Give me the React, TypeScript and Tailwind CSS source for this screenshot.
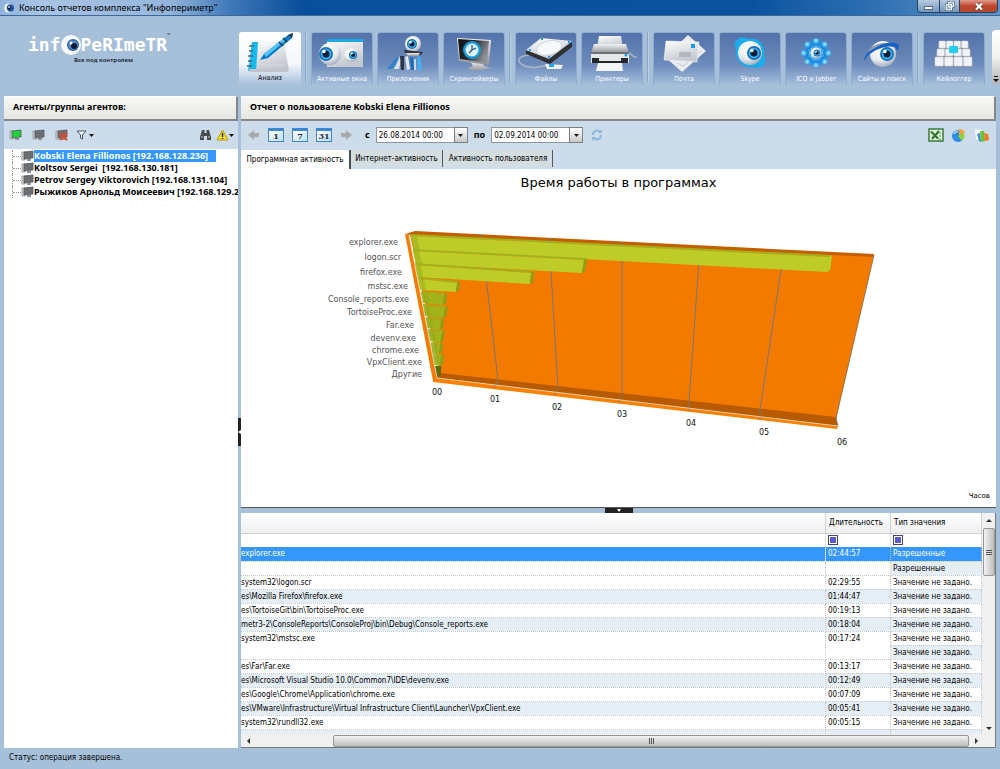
import React from "react";

const uiFont = "font-['DejaVu_Sans_Condensed','DejaVu_Sans',sans-serif]";
const boldFont = "text-[9px] font-bold font-['Noto_Sans',sans-serif]";

function Eye({ x, y, r, iris = r * 0.5, dx = 0 }: { x: number; y: number; r: number; iris?: number; dx?: number }) {
  return (
    <g>
      <circle cx={x} cy={y} r={r} fill="url(#ball)" />
      <circle cx={x + dx} cy={y} r={iris} fill="#1d6fb5" />
      <circle cx={x + dx} cy={y} r={iris * 0.75} fill="#35b4ee" />
      <circle cx={x + dx} cy={y} r={iris * 0.5} fill="#0b1d38" />
      <circle cx={x + dx - iris * 0.3} cy={y - iris * 0.35} r={iris * 0.25} fill="#fff" />
    </g>
  );
}

function SharedDefs() {
  return (
    <svg className="absolute w-0 h-0" aria-hidden="true">
      <defs>
        <radialGradient id="ball" cx="0.4" cy="0.3" r="0.75">
          <stop offset="0" stopColor="#fff" />
          <stop offset="0.6" stopColor="#e8ebef" />
          <stop offset="1" stopColor="#9aa6b8" />
        </radialGradient>
        <linearGradient id="paper" x1="0" y1="0" x2="0.4" y2="1">
          <stop offset="0" stopColor="#fff" />
          <stop offset="1" stopColor="#c3c8cf" />
        </linearGradient>
        <linearGradient id="metal" x1="0" y1="0" x2="0" y2="1">
          <stop offset="0" stopColor="#f5f5f6" />
          <stop offset="1" stopColor="#8e9197" />
        </linearGradient>
        <linearGradient id="screen" x1="0" y1="0" x2="1" y2="0.4">
          <stop offset="0" stopColor="#111" />
          <stop offset="0.5" stopColor="#26272a" />
          <stop offset="1" stopColor="#8d9097" />
        </linearGradient>
        <radialGradient id="petal" cx="0.5" cy="0.3" r="0.7">
          <stop offset="0" stopColor="#b5eeff" />
          <stop offset="0.5" stopColor="#35aaf0" />
          <stop offset="1" stopColor="#0f66c8" />
        </radialGradient>
      </defs>
    </svg>
  );
}

const icons: Record<string, React.ReactNode> = {
  analysis: (
    <g>
      <path d="M14 10 H45 L50 39 H10 Z" fill="url(#paper)" />
      <path d="M13 10 H19 L17 39 H9 Z" fill="#16b9ee" />
      <path d="M10 37 H49 V40 H10 Z" fill="#bfc4ca" />
      <path d="M22 21 H45 M21 27 H46 M20 33 H47" stroke="#d4d8de" />
      <path d="M10 14 H15 M10 19 H14 M9 24 H14 M9 29 H13 M8 34 H13" stroke="#5a626c" strokeWidth="1.5" />
      <path d="M21 28 L25 22 L49 3 L54 1 L53 6 L29 26 Z" fill="#0c78c8" />
      <path d="M25 22 L45 6 L47 8 L27 25 Z" fill="#54c4f8" />
      <path d="M40 10 L44 14 M44 6 L48 10" stroke="#26303c" strokeWidth="1.5" />
      <path d="M49 3 L54 1 L53 6 Z" fill="#2c3846" />
    </g>
  ),
  windows: (
    <g>
      <rect x="16" y="6" width="36" height="28" fill="url(#paper)" />
      <rect x="16" y="6" width="36" height="3" fill="#18a9e8" />
      <Eye x={19} y={21} r={11} iris={7} dx={-4} />
      <Eye x={40} y={22} r={7} iris={4} dx={2} />
    </g>
  ),
  apps: (
    <g>
      <Eye x={36} y={11} r={8} iris={5} dx={-1} />
      <path d="M27 17 L46 19 L44 22 L28 20 Z" fill="#30343a" />
      <path d="M29 20 H43 L41 23 H31 Z" fill="url(#metal)" />
      <path d="M10 36 L20 24 L23 26 L15 36 Z" fill="#2f83cc" />
      <path d="M17 36 L23 23 L25 24 L22 36 Z" fill="#dbe2ea" />
      <path d="M23 23 H27 V37 H24 Z" fill="#2b3543" />
      <path d="M28 24 L31 23 L33 36 L30 37 Z" fill="#e4e8ee" />
      <path d="M33 25 L36 24 L37 37 H34 Z" fill="#176db9" />
      <path d="M37 26 H39 V37 H37 Z" fill="#cdd5df" />
      <path d="M40 24 L43 23 L45 37 H41 Z" fill="#42b3ee" />
    </g>
  ),
  screensaver: (
    <g>
      <path d="M27 28 H39 L41 33 L48 35 L34 38 L24 36 L30 33 Z" fill="url(#metal)" />
      <path d="M14 5 L48 7 L46 32 L16 28 Z" fill="url(#metal)" />
      <path d="M15 6 L46 8 L44 30 L17 26 Z" fill="url(#screen)" />
      <circle cx="29" cy="17" r="9" fill="#159bd8" />
      <circle cx="29" cy="17" r="6.5" fill="#dff4fd" />
      <path d="M29 12 V17 L33 15 M29 17 L26 20" stroke="#1c4f80" fill="none" strokeWidth="1.2" />
    </g>
  ),
  files: (
    <g>
      <path d="M15 22 C2 23 0 29 10 33 C17 36 24 34 33 32" stroke="#aeb6c1" strokeWidth="1.5" fill="none" />
      <path d="M11 17 L34 25 L57 9 V14 L35 31 L11 21 Z" fill="#2e3033" />
      <path d="M11 17 L26 5 L57 8 L34 26 Z" fill="url(#paper)" />
      <ellipse cx="34" cy="15" rx="13" ry="7" transform="rotate(-14 34 15)" fill="#f7f8f9" stroke="#cbd0d6" strokeWidth="0.8" />
      <path d="M26 6 l2 0 M53 9 l2 0 M14 17 l2 0 M33 24 l2 0" stroke="#18a0e4" strokeWidth="2" />
      <path d="M30 31 L48 32 L46 36 L32 36 Z" fill="#edf0f4" />
      <path d="M34 31 H39 V34 H34 Z" fill="#22a8e6" />
    </g>
  ),
  printers: (
    <g>
      <path d="M18 3 H40 L42 15 H16 Z" fill="url(#paper)" />
      <path d="M45 20 C51 17 50 26 56 24" stroke="#aeb6c1" strokeWidth="1.5" fill="none" />
      <path d="M13 11 H45 L48 20 H10 Z" fill="url(#metal)" />
      <path d="M10 20 H48 V30 H10 Z" fill="#e6e7e9" />
      <path d="M10 19 H48 V21 H10 Z" fill="#6c7078" />
      <path d="M11 25 H18 V30 H11 Z M40 25 H47 V30 H40 Z M18 28 H40 V31 H18 Z" fill="#24272c" />
      <circle cx="45" cy="22" r="1.5" fill="#139ce4" />
      <path d="M17 30 H41 L42 38 H15 Z" fill="#f3f4f6" />
    </g>
  ),
  mail: (
    <g>
      <path d="M35 2 L53 18 L29 39 L12 24 Z" fill="#e9ebee" />
      <path d="M24 30 L30 33 L48 18" stroke="#c2c6cc" fill="none" />
      <path d="M13 8 L46 9 L44 29 L11 27 Z" fill="url(#paper)" stroke="#fff" strokeWidth="0.5" />
      <path d="M38 11 H42 V15 H38 Z" fill="#149ce6" />
      <path d="M26 19 H38 V24 H26 Z" fill="#b3b8bf" />
    </g>
  ),
  skype: (
    <g>
      <path d="M17 16 C12 6 24 2 29 6 C39 3 47 12 45 22 C50 32 40 37 34 34 C24 36 15 27 17 16 Z" fill="#1bacec" />
      <Eye x={31} y={20} r={12} iris={7} dx={4} />
    </g>
  ),
  icq: (
    <g>
      {[0, 45, 90, 135, 180, 225, 270, 315].map((a) => (
        <g key={a} transform={`rotate(${a} 31 20)`}>
          <path d="M31 20 L27 11 C25 4 37 4 35 11 Z" fill="url(#petal)" />
          <circle cx="31" cy="9" r="3.8" fill="url(#petal)" />
        </g>
      ))}
      <Eye x={31} y={20} r={5.5} iris={3.5} dx={1} />
    </g>
  ),
  sites: (
    <g>
      <Eye x={32} y={21} r={13} iris={7} dx={4} />
      <path d="M18 18 C25 10 37 9 44 14" stroke="#8e98a8" strokeWidth="2" fill="none" />
      <path d="M13 28 C12 16 44 3 48 13 C48 16 47 17 46 18 C47 9 20 14 13 28 Z" fill="#1763c4" />
    </g>
  ),
  keylogger: (
    <g>
      <path d="M16 8 H45 L50 34 H11 Z" fill="#8b93a1" />
      {[0, 1, 2, 3].map((c) => (
        <g key={c} fill="#f1f2f5" stroke="#cfd3da" strokeWidth="0.5">
          <rect x={16 + c * 7.5} y="8" width="6.5" height="7" rx="1" />
          <rect x={14 + c * 8.5} y="16" width="7.5" height="7" rx="1" />
          <rect x={12 + c * 9.5} y="24" width="8.5" height="9" rx="1" />
        </g>
      ))}
      <rect x="26" y="13" width="9" height="7" rx="1" fill="#25cdf0" />
    </g>
  ),
};

const modules = [
  { id: "analysis", label: "Анализ", sepAfter: true },
  { id: "windows", label: "Активные окна" },
  { id: "apps", label: "Приложения" },
  { id: "screensaver", label: "Скринсейверы", sepAfter: true },
  { id: "files", label: "Файлы" },
  { id: "printers", label: "Принтеры", sepAfter: true },
  { id: "mail", label: "Почта" },
  { id: "skype", label: "Skype" },
  { id: "icq", label: "ICQ и Jabber" },
  { id: "sites", label: "Сайты и поиск", sepAfter: true },
  { id: "keylogger", label: "Кейлоггер" },
];

const agents = [
  "Kobski Elena Fillionos [192.168.128.236]",
  "Koltsov Sergei  [192.168.130.181]",
  "Petrov Sergey Viktorovich [192.168.131.104]",
  "Рыжиков Арнольд Моисеевич [192.168.129.2",
];

const bars = [
  { name: "explorer.exe", lx: 398, ly: 245, pts: [411, 236, 829, 257, 827, 272, 414, 250] },
  { name: "logon.scr", lx: 401, ly: 260, pts: [413, 251, 584, 260, 582, 273, 416, 264] },
  { name: "firefox.exe", lx: 402, ly: 275, pts: [415, 265, 531, 273, 530, 284, 417, 277] },
  { name: "mstsc.exe", lx: 408, ly: 289, pts: [418, 279, 457, 283, 456, 292, 420, 290] },
  { name: "Console_reports.exe", lx: 409, ly: 302, pts: [421, 293, 444, 295, 443, 305, 423, 303] },
  { name: "TortoiseProc.exe", lx: 412, ly: 315, pts: [423, 306, 445, 308, 443, 318, 425, 316] },
  { name: "Far.exe", lx: 414, ly: 328, pts: [426, 319, 441, 320, 440, 330, 427, 328] },
  { name: "devenv.exe", lx: 416, ly: 341, pts: [428, 331, 442, 332, 440, 343, 430, 341] },
  { name: "chrome.exe", lx: 419, ly: 353, pts: [431, 344, 440, 345, 439, 354, 432, 353] },
  { name: "VpxClient.exe", lx: 422, ly: 365, pts: [432, 355, 441, 356, 440, 366, 434, 365] },
];

const gridLines = [
  [481, 234, 498, 380, 494, 388],
  [549, 238, 558, 388, 555, 395],
  [622, 242, 622, 394, 619, 403],
  [700, 246, 689, 402, 688, 411],
  [784, 250, 760, 410, 760, 419],
];

const ticks = [
  ["00", 437, 395],
  ["01", 495, 402],
  ["02", 557, 410],
  ["03", 622, 417],
  ["04", 691, 426],
  ["05", 764, 435],
  ["06", 842, 445],
] as const;

const rows = [
  { path: "explorer.exe", time: "02:44:57", type: "Разрешенные", kind: "selected" },
  { path: "", time: "", type: "Разрешенные", kind: "half" },
  { path: "system32\\logon.scr", time: "02:29:55", type: "Значение не задано.", kind: "plain" },
  { path: "es\\Mozilla Firefox\\firefox.exe", time: "01:44:47", type: "Значение не задано.", kind: "alt" },
  { path: "es\\TortoiseGit\\bin\\TortoiseProc.exe", time: "00:19:13", type: "Значение не задано.", kind: "plain" },
  { path: "metr3-2\\ConsoleReports\\ConsoleProj\\bin\\Debug\\Console_reports.exe", time: "00:18:04", type: "Значение не задано.", kind: "alt" },
  { path: "system32\\mstsc.exe", time: "00:17:24", type: "Значение не задано.", kind: "tall" },
  { path: "", time: "", type: "Значение не задано.", kind: "half" },
  { path: "es\\Far\\Far.exe", time: "00:13:17", type: "Значение не задано.", kind: "plain" },
  { path: "es\\Microsoft Visual Studio 10.0\\Common7\\IDE\\devenv.exe", time: "00:12:49", type: "Значение не задано.", kind: "alt" },
  { path: "es\\Google\\Chrome\\Application\\chrome.exe", time: "00:07:09", type: "Значение не задано.", kind: "plain" },
  { path: "es\\VMware\\Infrastructure\\Virtual Infrastructure Client\\Launcher\\VpxClient.exe", time: "00:05:41", type: "Значение не задано.", kind: "alt" },
  { path: "system32\\rundll32.exe", time: "00:05:15", type: "Значение не задано.", kind: "plain" },
  { path: "", time: "", type: "", kind: "alt" },
];

function TitleBar() {
  return (
    <header className="flex h-4 shrink-0 items-center bg-[linear-gradient(to_right,#8fb2dc,#a9c4e4_4%,#94b5db_17%,#3f78b8_23%,#0a4f9b_30%,#0a529f_75%,#2a6cb0_86%,#5d93c9)] border-b border-[#3c6796] pl-1">
      <svg className="w-[11px] h-3 mr-1" viewBox="0 0 12 12">
        <circle cx="5" cy="6" r="5" fill="#f2f6fa" />
        <circle cx="7" cy="6" r="4" fill="#2757a5" />
        <circle cx="6" cy="6" r="2" fill="#0d1b33" />
        <circle cx="5.5" cy="5" r="1" fill="#fff" />
      </svg>
      <h1 className="text-[9px] text-black font-['Noto_Sans',sans-serif]">Консоль отчетов комплекса "Инфопериметр"</h1>
      <div className="ml-auto mr-0.5 flex self-start h-[13px] rounded-b border border-t-0 border-[#27415f] overflow-hidden">
        <button aria-label="Свернуть" className="w-[22px] bg-linear-to-b from-[#b6cbe2] to-[#7596ba] border-r border-[#27415f] flex items-center justify-center">
          <svg width="11" height="10" viewBox="0 0 11 10"><path d="M1.5 5.5 h8 v3 h-8 z" fill="#fff" stroke="#3c4d63" strokeWidth="0.8" /></svg>
        </button>
        <button aria-label="Восстановить" className="w-5 bg-linear-to-b from-[#b6cbe2] to-[#7596ba] border-r border-[#27415f] flex items-center justify-center">
          <svg width="10" height="10" viewBox="0 0 10 10"><path d="M3.5 1 h5 v5 h-5 z M1 3.5 h5.5 v5.5 h-5.5 z" fill="#8fabca" stroke="#3c4d63" strokeWidth="2" /><path d="M3.5 1 h5 v5 h-5 z M1 3.5 h5.5 v5.5 h-5.5 z" fill="#8fabca" stroke="#fff" /></svg>
        </button>
        <button aria-label="Закрыть" className="w-[37px] bg-linear-to-b from-[#dc9a8c] via-[#c0432b] via-50% to-[#b34a31] flex items-center justify-center">
          <svg width="10" height="9" viewBox="0 0 10 9"><path d="M2 1.5 L8 7.5 M8 1.5 L2 7.5" stroke="#6b3a3a" strokeWidth="3.5" /><path d="M2 1.5 L8 7.5 M8 1.5 L2 7.5" stroke="#fff" strokeWidth="2.2" /></svg>
        </button>
      </div>
    </header>
  );
}

function Logo() {
  return (
    <div className="w-[235px] shrink-0 pl-7 pt-[17px]">
      <div className="flex items-center h-6 text-white text-[18px] leading-none font-bold font-['DejaVu_Sans_Mono',monospace]">
        <span>inf</span>
        <svg className="w-5 h-5" viewBox="0 0 20 20">
          <circle cx="10" cy="10" r="10" fill="#f6f8fa" />
          <circle cx="12" cy="10" r="6" fill="#3565ad" />
          <circle cx="12" cy="10" r="4.5" fill="#5b8dcc" />
          <circle cx="13" cy="11" r="3" fill="#0c1a33" />
          <circle cx="10" cy="8" r="1.5" fill="#fff" />
        </svg>
        <span>PeRImeTR</span>
        <span className="self-start text-[5px] text-slate-700">™</span>
      </div>
      <p className="pl-[46px] text-[6px] leading-none font-bold text-[#26323f] font-['Noto_Sans',sans-serif]">Все под контролем</p>
    </div>
  );
}

function ModuleBar() {
  return (
    <nav className="flex h-[80px] shrink-0">
      <Logo />
      <div className="flex flex-1 min-w-0 gap-1 pt-4 pl-1">
        {modules.map((m, i) => (
          <React.Fragment key={m.id}>
            <button
              className={
                i === 0
                  ? "flex h-[53px] w-[62px] shrink-0 flex-col items-center rounded-t-[3px] bg-linear-to-b from-white via-[#f3f7fb] via-60% to-[#a7c0da] text-black"
                  : "flex h-[53px] w-[62px] shrink-0 flex-col items-center rounded-t-[3px] border-x border-t border-[#8fabd0] bg-linear-to-b from-[#5373aa] via-[#6c8abb] via-60% to-[#a5bfdb] text-white"
              }
            >
              <svg className="w-[62px] h-[41px] shrink-0" viewBox="0 0 62 41">{icons[m.id]}</svg>
              <span className="text-[7px] leading-[10px] whitespace-nowrap">{m.label}</span>
            </button>
            {m.sepAfter && <span className="w-0.5 h-[50px] shrink-0 border-l border-[#8ba5c2] bg-[#b9cfe4]" />}
          </React.Fragment>
        ))}
      </div>
      <button aria-label="Другие модули" className="flex w-2 mt-3.5 h-[54px] items-end justify-center rounded-l bg-linear-to-b from-white via-[#f1f1ef] to-[#b5b5b5] pb-0.5">
        <svg width="6" height="6" viewBox="0 0 6 6"><path d="M1 0 H5 V1 H1 Z M0 3 H6 L3 6 Z" fill="#111" /></svg>
      </button>
    </nav>
  );
}

function PcIcon({ color = "#6b6f74", off = false }: { color?: string; off?: boolean }) {
  return (
    <svg className="w-[13px] h-3 shrink-0" viewBox="0 0 13 12">
      <path d="M1 2 H4 V10 H1 Z" fill="#d5d7d9" stroke="#8c9094" strokeWidth="0.8" />
      <path d="M3 2 L12 1 V8 L3 9 Z" fill={color} stroke="#56595d" strokeWidth="0.8" />
      <path d="M6 9 H10 V11 H6 Z" fill="#8c9094" />
      {off && <path d="M5 4 L12 11 M12 4 L5 11" stroke="#e2492a" strokeWidth="2" />}
    </svg>
  );
}

const caret = <svg width="5" height="3" viewBox="0 0 5 3"><path d="M0 0 H5 L2.5 3 Z" fill="#111" /></svg>;

const panelHead = `h-[25px] shrink-0 border-t border-b-2 border-r-2 border-t-white border-r-[#85888a] border-b-[#85888a] bg-linear-to-b from-[#f7f7f5] to-[#e6e6e1] leading-[20px] text-black ${boldFont}`;

function AgentsPanel() {
  return (
    <aside className="flex w-[234px] shrink-0 flex-col bg-white">
      <h2 className={`${panelHead} pl-[9px]`}>Агенты/группы агентов:</h2>
      <div className="flex h-7 shrink-0 items-center bg-[#cddceb] pl-[5px] pr-1">
        <button aria-label="Включенные" className="mr-2.5"><PcIcon color="#1fd03c" /></button>
        <button aria-label="Выключенные" className="mr-2.5"><PcIcon /></button>
        <button aria-label="Удалить" className="mr-2"><PcIcon off /></button>
        <button aria-label="Фильтр" className="flex items-center gap-0.5">
          <svg width="11" height="10" viewBox="0 0 11 10"><path d="M1 1 H10 L6.5 5 V9 L4.5 8 V5 Z" fill="#eef3f8" stroke="#4d5660" /></svg>
          {caret}
        </button>
        <button aria-label="Поиск" className="ml-auto mr-1">
          <svg width="13" height="12" viewBox="0 0 13 12">
            <path d="M3 1 H5.5 V4 H7.5 V1 H10 L12 8 V11 H8 V7 H5 V11 H1 V8 Z" fill="#474b50" />
            <path d="M2 8 H4 M9 8 H11" stroke="#c6cbd0" />
          </svg>
        </button>
        <button aria-label="Предупреждения" className="flex items-center">
          <svg width="13" height="12" viewBox="0 0 13 12"><path d="M6.5 1 L12 11 H1 Z" fill="#fbe11d" stroke="#b99a10" strokeLinejoin="round" /><path d="M6.5 4 V8 M6.5 9 V10" stroke="#222" strokeWidth="1.4" /></svg>
          {caret}
        </button>
      </div>
      <ul className={`flex-1 overflow-hidden pt-px leading-[12px] text-black ${boldFont}`}>
        {agents.map((name, i) => (
          <li key={name} className="flex h-3 items-center whitespace-pre">
            <span className="ml-2 h-full border-l border-dotted border-[#999]" />
            <span className="w-2 shrink-0 border-t border-dotted border-[#999]" />
            <PcIcon />
            <button className={i === 0 ? "bg-[#3596fb] pr-2 text-left text-white" : "text-left"}>{name}</button>
          </li>
        ))}
      </ul>
    </aside>
  );
}

function CalendarButton({ days }: { days: string }) {
  return (
    <button className="h-3.5 w-4 border border-[#3f86d0] border-t-[3px] bg-linear-to-br from-white to-[#b9def5] text-center text-[8px] leading-[10px] font-bold text-[#1e2c44] font-['DejaVu_Serif',serif]">
      {days}
    </button>
  );
}

function Arrow({ flip = false }: { flip?: boolean }) {
  return (
    <button aria-label={flip ? "Вперёд" : "Назад"}>
      <svg className={flip ? "rotate-180" : ""} width="13" height="12" viewBox="0 0 13 12"><path d="M1 6 L7 1 V4 H12 V8 H7 V11 Z" fill="#a5a9ad" stroke="#bcc2c7" strokeWidth="0.5" /></svg>
    </button>
  );
}

function DateField({ id, label, value }: { id: string; label: string; value: string }) {
  return (
    <div className="flex items-center">
      <label htmlFor={id} className={`mr-1.5 ${boldFont}`}>{label}</label>
      <input id={id} defaultValue={value} className="h-4 w-[79px] border border-[#8f959b] bg-white px-0.5 text-[8px] text-black" />
      <button aria-label="Открыть календарь" className="-ml-px flex h-4 w-3.5 items-center justify-center border border-[#7b7f83] bg-linear-to-b from-white to-[#c9c9c9]">{caret}</button>
    </div>
  );
}

function ReportToolbar() {
  return (
    <div className="flex h-7 shrink-0 items-center gap-2 bg-[#cddceb] px-1.5">
      <Arrow />
      <div className="flex gap-2">
        <CalendarButton days="1" />
        <CalendarButton days="7" />
        <CalendarButton days="31" />
      </div>
      <Arrow flip />
      <div className="flex gap-1.5 ml-1">
        <DateField id="from" label="с" value="26.08.2014 00:00" />
        <DateField id="to" label="по" value="02.09.2014 00:00" />
      </div>
      <button aria-label="Обновить">
        <svg width="12" height="12" viewBox="0 0 12 12"><path d="M2 6 A4 4 0 0 1 9 3 M10 6 A4 4 0 0 1 3 9" fill="none" stroke="#8fb9dc" strokeWidth="2" /><path d="M7 4 H11 V0 Z M5 8 H1 V12 Z" fill="#8fb9dc" /></svg>
      </button>
      <div className="ml-auto flex items-center gap-[7px]">
        <button aria-label="Экспорт в Excel">
          <svg width="16" height="14" viewBox="0 0 16 14"><path d="M1 1 H15 V13 H1 Z" fill="#e5f0df" stroke="#3b7a3c" strokeWidth="1.5" /><path d="M3 3.5 L10 10.5 M11 3 L4 11" stroke="#2c7a31" strokeWidth="2.2" /><path d="M11 5 H13 M11 8 H13 M10 11 H13" stroke="#5c9c58" /></svg>
        </button>
        <button aria-label="Круговая диаграмма">
          <svg width="16" height="15" viewBox="0 0 16 15"><circle cx="7" cy="8" r="6" fill="#2f8de4" /><path d="M7 8 L12.5 5 A6 6 0 0 1 11 13 Z" fill="#8ed43b" /><path d="M8 7 V1 A6 6 0 0 1 14 5 Z" fill="#f8a437" /><path d="M3 6 A4 4 0 0 1 7 3.5" stroke="#a8dcfb" strokeWidth="1.5" fill="none" /></svg>
        </button>
        <button aria-label="Столбчатая диаграмма">
          <svg width="16" height="15" viewBox="0 0 16 15"><path d="M1 1 L8 2 L6 12 L2 11 Z" fill="#f7fafc" /><path d="M3 6 L6 5 L7 14 L5 13 Z" fill="#3a8de0" /><path d="M6 3 L10 3 L11 13 L7 14 Z" fill="#6cc12e" /><path d="M10 5 L14 6 L15 12 L11 13 Z" fill="#f07a22" /></svg>
        </button>
      </div>
    </div>
  );
}

function Tabs() {
  const tabs = ["Программная активность", "Интернет-активность", "Активность пользователя"];
  return (
    <div role="tablist" className="flex h-5 shrink-0 bg-[#cddceb] pt-px text-[8px] text-black">
      {tabs.map((t, i) => (
        <button
          key={t}
          role="tab"
          aria-selected={i === 0}
          className={i === 0 ? "w-[110px] whitespace-nowrap border-r-2 border-[#4b4f52] bg-white" : "mr-px h-[17px] w-[92px] whitespace-nowrap border-r border-[#55595c] bg-[#d4dddf] last:w-[109px]"}
        >
          {t}
        </button>
      ))}
    </div>
  );
}

function Chart() {
  return (
    <section className="flex flex-1 min-h-0 flex-col border-b border-[#55595c] bg-white">
      <h3 className="h-[26px] shrink-0 pt-1.5 text-center text-[13px] leading-[16px] text-black font-['DejaVu_Sans',sans-serif]">Время работы в программах</h3>
      <svg className="w-full flex-1 min-h-0" viewBox="242 195 753 290" fontFamily="DejaVu Sans, sans-serif" fontSize="8">
        {/* back wall, floor and side frame */}
        <polygon points="410,235 874,255 836,419 440,374" fill="#f37a00" />
        <polygon points="405,234 415,231 874,254 873,257 411,235" fill="#c45f00" />
        <polygon points="440,373 836,417 838,426 437,378" fill="#b85a00" />
        <polygon points="405,234 409,235 437,378 433,381" fill="#f37a00" />
        <polygon points="433,380 437,378 838,426 837,429 433,382" fill="#f98000" />
        <path d="M874 255 L836 418 L838 427" fill="none" stroke="#7d6a55" strokeWidth="0.8" />
        {gridLines.map(([a, b, c, d, e, f]) => (
          <path key={a} d={`M${a} ${b} L${c} ${d} L${e} ${f}`} fill="none" stroke="#7a7672" />
        ))}
        {bars.map(({ name, lx, ly, pts: [x1, y1, x2, y2, x3, y3, x4, y4] }, i) => (
          <g key={name}>
            <g opacity="0.93">
              <polygon points={`${x1},${y1} ${x1},${y1 - 2} ${x2 + 1},${y2 - 2} ${x2},${y2}`} fill="#9db321" />
              <polygon points={`${x1},${y1} ${x2},${y2} ${x3},${y3} ${x4},${y4}`} fill={i < 4 ? "#bbd32a" : "#9db91e"} />
              <polygon points={`${x2},${y2} ${x2 + 3},${y2 - 2} ${x3 + 3},${y3 - 2} ${x3},${y3}`} fill={i < 1 ? "#a9e02c" : "#7fa318"} />
              <polygon points={`${x1},${y1} ${x1 + 6},${y1} ${x4 + 6},${y4} ${x4},${y4}`} fill="#84a41c" opacity="0.4" />
            </g>
            <text x={lx} y={ly} textAnchor="end" fill="#555">{name}</text>
          </g>
        ))}
        <polygon points="435,366 441,366 441,374 437,378" fill="#5c6b0c" />
        <polyline points="409,236 437,378 838,426" fill="none" stroke="#ecd8c0" strokeWidth="0.8" />
        <text x="422" y="377" textAnchor="end" fill="#555">Другие</text>
        {ticks.map(([t, x, y]) => (
          <text key={t} x={x} y={y} textAnchor="middle" fill="#111">{t}</text>
        ))}
      </svg>
      <p className="h-[22px] shrink-0 pr-1.5 text-right text-[7px] leading-[22px] text-black font-['DejaVu_Sans',sans-serif]">Часов</p>
    </section>
  );
}

const cellClass: Record<string, string> = {
  selected: "bg-[#3596fb] text-white",
  plain: "bg-white",
  tall: "bg-white",
  half: "bg-white",
  alt: "bg-[#e5edf5]",
};

function FilterMark({ label }: { label: string }) {
  return (
    <button aria-label={label} className="ml-px flex h-2.5 w-2.5 items-center justify-center border border-[#45456e] bg-white">
      <span className="h-1.5 w-1.5 bg-[#5a5ac8]" />
    </button>
  );
}

function ReportTable() {
  const cell = "border-r border-dotted border-[#c4c8cc]";
  return (
    <section className="flex h-[235px] shrink-0 flex-col border-r border-b border-[#77797b] bg-white">
      <div className="flex flex-1 min-h-0">
        <div className="flex-1 min-w-0 overflow-hidden">
          <table className="w-full table-fixed border-collapse text-[8px] leading-[13px] text-black">
            <colgroup>
              <col />
              <col className="w-[65px]" />
              <col className="w-[91px]" />
            </colgroup>
            <thead>
              <tr className="h-5 bg-linear-to-b from-white to-[#eeeeee] text-left whitespace-nowrap">
                <th className="border-r border-b border-[#ccd3d3] font-normal" />
                <th className="border-r border-b border-[#ccd3d3] pl-[3px] font-normal">Длительность</th>
                <th className="border-r border-b border-[#ccd3d3] pl-[3px] font-normal">Тип значения</th>
              </tr>
            </thead>
            <tbody>
              <tr className="h-3.5">
                <td className={cell} />
                <td className={`${cell} pl-px`}><FilterMark label="Фильтр по длительности" /></td>
                <td className={`${cell} pl-px`}><FilterMark label="Фильтр по типу" /></td>
              </tr>
              {rows.map((r, i) => (
                <tr key={i} className={`h-3.5 whitespace-nowrap ${cellClass[r.kind]}`}>
                  <td className={`${cell} overflow-hidden ${r.kind === "tall" ? "" : "border-b"}`}>{r.path}</td>
                  <td className={`${cell} pl-0.5 ${r.kind === "tall" ? "" : "border-b"}`}>{r.time}</td>
                  <td className={`${cell} border-b pl-0.5 ${r.kind === "half" ? "bg-[#e5edf5]" : ""}`}>{r.type}</td>
                </tr>
              ))}
            </tbody>
          </table>
        </div>
        <div className="flex w-[13px] shrink-0 flex-col items-center bg-[#f0f0f0]">
          <svg className="my-1.5" width="6" height="3" viewBox="0 0 6 3"><path d="M0 3 L3 0 L6 3 Z" fill="#333" /></svg>
          <div className="flex h-[48px] w-3 flex-col items-center justify-center gap-px rounded-xs border border-[#979797] bg-linear-to-r from-[#f3f3f3] to-[#bdbdbd]">
            <span className="h-px w-1.5 bg-[#555]" />
            <span className="h-px w-1.5 bg-[#555]" />
            <span className="h-px w-1.5 bg-[#555]" />
          </div>
          <svg className="mt-auto mb-1" width="6" height="3" viewBox="0 0 6 3"><path d="M0 0 H6 L3 3 Z" fill="#333" /></svg>
        </div>
      </div>
      <div className="flex h-[13px] shrink-0 items-center bg-[#f0f0f0] pl-1.5">
        <svg width="3" height="6" viewBox="0 0 3 6"><path d="M3 0 V6 L0 3 Z" fill="#333" /></svg>
        <div className="ml-[83px] mr-1.5 flex h-3 flex-1 items-center justify-center gap-px rounded-xs border border-[#979797] bg-linear-to-b from-[#f3f3f3] to-[#bdbdbd]">
          <span className="h-1.5 w-px bg-[#555]" />
          <span className="h-1.5 w-px bg-[#555]" />
          <span className="h-1.5 w-px bg-[#555]" />
        </div>
        <svg className="mr-[17px]" width="3" height="6" viewBox="0 0 3 6"><path d="M0 0 V6 L3 3 Z" fill="#333" /></svg>
      </div>
    </section>
  );
}

export default function App() {
  return (
    <div className={`flex h-screen flex-col overflow-hidden bg-[#a7c0da] ${uiFont}`}>
      <SharedDefs />
      <TitleBar />
      <ModuleBar />
      <main className="flex flex-1 min-h-0 pl-1 pr-1">
        <AgentsPanel />
        <div className="flex w-[3px] shrink-0 items-center">
          <button aria-label="Свернуть панель" className="flex h-7 w-[3px] items-center bg-[#222] mt-5">
            <svg width="3" height="4" viewBox="0 0 3 4"><path d="M3 0 V4 L0 2 Z" fill="#fff" /></svg>
          </button>
        </div>
        <div className="flex flex-1 min-w-0 flex-col">
          <h2 className={`${panelHead} pl-[9px]`}>Отчет о пользователе Kobski Elena Fillionos</h2>
          <ReportToolbar />
          <Tabs />
          <Chart />
          <div className="flex h-[5px] shrink-0 justify-center">
            <button aria-label="Свернуть таблицу" className="flex h-[5px] w-7 items-center justify-center bg-[#222]">
              <svg width="4" height="3" viewBox="0 0 4 3"><path d="M0 0 H4 L2 3 Z" fill="#fff" /></svg>
            </button>
          </div>
          <ReportTable />
        </div>
      </main>
      <footer className="h-[21px] shrink-0 pl-[9px] text-[8px] leading-[19px] text-black">Статус: операция завершена.</footer>
    </div>
  );
}
